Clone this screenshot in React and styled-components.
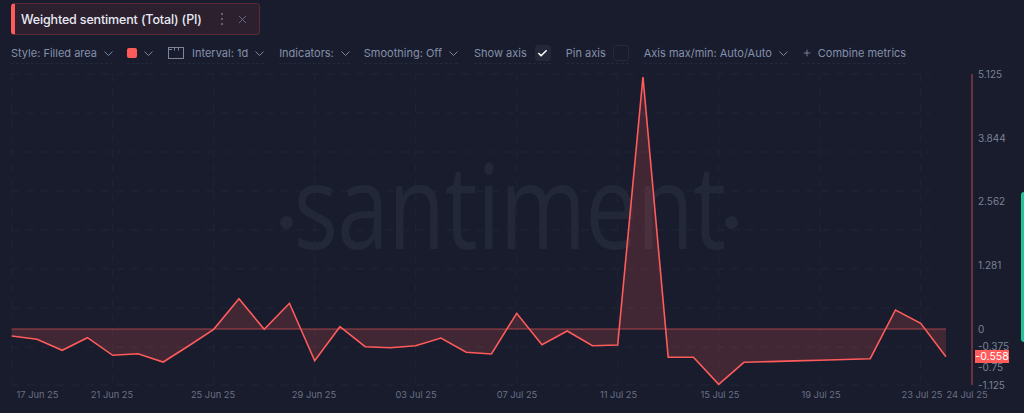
import React from "react";
import styled, { createGlobalStyle } from "styled-components";
import { Check, Plus, X } from "lucide-react";

const Global = createGlobalStyle`
  html, body { margin: 0; padding: 0; background: #181c2d; overflow: hidden; }
  body { font-family: Inter, "Liberation Sans", sans-serif; }
`;

const Page = styled.div`
  width: 1024px; height: 413px; background: #181c2d; position: relative; overflow: hidden;
  display: flex; flex-direction: column; padding: 3px 0 0 11px; box-sizing: border-box;
`;
const MetricRow = styled.div`display: flex; position: relative;`;
const MetricCard = styled.div`
  width: 249px; height: 32px; box-sizing: border-box; display: flex; align-items: center;
  background: #2c1f2e; border: 1px solid #5c2a37; border-left: 4px solid #ff5b5b; border-radius: 4px;
  padding-left: 6px; color: #e7eaf3; font-size: 12.5px; font-weight: 500; letter-spacing: -0.15px;
`;
const MetricName = styled.span`flex: 0 0 178px; white-space: nowrap;`;
const CardIcon = styled.span`
  display: flex; align-items: center; color: #6f7a93; margin-left: ${p => p.$gap}px;
`;
const Toolbar = styled.div`
  position: relative; display: flex; align-items: flex-start; height: 21px; margin-top: 8px; color: #8490aa; font-size: 11px; white-space: nowrap;
`;
const Item = styled.div`
  display: flex; align-items: center; height: 20px; border-bottom: 1px dashed #23283a; margin-right: ${p => p.$mr}px;
`;
const Label = styled.span`margin-left: ${p => p.$ml || 0}px;`;
const ChevSvg = styled.svg`margin-left: ${p => p.$ml || 7}px; flex: none;`;
const Chev = ({ ml }) => (
  <ChevSvg $ml={ml} width="9" height="5" viewBox="0 0 9 5" fill="none" stroke="#7a859e" strokeWidth="1"><path d="M0.5 0.5L4.5 4.5L8.5 0.5" /></ChevSvg>
);
const Swatch = styled.span`width: 10px; height: 10px; background: #ff5b5b; border-radius: 2px; display: block;`;
const CheckBox = styled.span`
  width: 16px; height: 16px; box-sizing: border-box; border-radius: 3px; margin-left: ${p => p.$ml}px; display: flex; align-items: center; justify-content: center;
  background: ${p => p.$on ? "#232839" : "transparent"}; border: 1px solid ${p => p.$on ? "#232839" : "#252a3b"}; color: #fff;
`;
const Chart = styled.svg`position: absolute; left: 0; top: 0; width: 1024px; height: 413px;`;
const Watermark = styled.div`
  position: absolute; left: 280px; top: 140px; width: 458px; height: 164px; display: flex; align-items: center; justify-content: space-between;
  color: #232838;
`;
const WatermarkDot = styled.span`width: 13px; height: 13px; border-radius: 50%; background: #232838; flex: none;`;
const WatermarkText = styled.span`
  flex: none; margin: -36px -60px 0; font-family: "Open Sans", sans-serif; font-weight: 400; font-size: 118px; line-height: 164px; letter-spacing: -1px; white-space: nowrap;
  transform: scaleX(0.79); transform-origin: center;
`;
const Side = styled.div`
  position: absolute; right: 0; top: 192px; width: 3px; height: 150px; background: #26c197; border-radius: 3px 0 0 3px;
`;
const Badge = styled.div`
  position: absolute; left: 975px; top: 350px; width: 34px; height: 13px; background: #ff5b5b; color: #fff; font-size: 10.5px; line-height: 13px; text-align: center;
`;

const ys = [336,339.3,350.3,337.7,355.3,353.7,362,346,329.3,298.7,329.3,303.3,360.7,326.7,346.7,347.7,345.7,338,352.3,354,313.3,344.7,331,345.7,345,77,357.3,357.3,384.3,362.3,361.6,360.9,360.2,359.5,358.7,310,323.3,356.7];
const X0 = 11.7, STEP = 25.25, BASE = 329;
const pts = ys.map((y, i) => [X0 + i * STEP, y]);
const line = pts.map(p => p.join(",")).join(" ");
const area = `${X0},${BASE} ${line} ${pts[pts.length - 1][0]},${BASE}`;
const hLines = [74,113,152,191,230,269,308,347,385];
const vLines = [0,1,2,3,4,5,6,7,8,9].map(i => 11.7 + i * 101);
const dates = [["17 Jun 25",37.5],["21 Jun 25",112],["25 Jun 25",213],["29 Jun 25",314],["03 Jul 25",416],["07 Jul 25",517],["11 Jul 25",618.5],["15 Jul 25",720],["19 Jul 25",821],["23 Jul 25",922],["24 Jul 25",967]];
const axis = [["5.125",74],["3.844",138],["2.562",201],["1.281",265],["0",329],["-0.375",346],["-0.75",367],["-1.125",385]];

const DotsIcon = () => (
  <svg width="4" height="14" viewBox="0 0 4 14"><circle cx="2" cy="2" r="1" fill="currentColor"/><circle cx="2" cy="7" r="1" fill="currentColor"/><circle cx="2" cy="12" r="1" fill="currentColor"/></svg>
);
const IntervalIcon = () => (
  <svg width="16" height="12" viewBox="0 0 16 12" fill="none" stroke="#7a859e" strokeWidth="1"><rect x="0.5" y="0.5" width="15" height="11"/><path d="M1 2.5H4M6.5 1v2.5M10.5 1v2.5" /></svg>
);

export default function App() {
  return (
    <Page>
      <Global />
      <Watermark>
        <WatermarkDot />
        <WatermarkText>santiment</WatermarkText>
        <WatermarkDot />
      </Watermark>
      <Chart viewBox="0 0 1024 413">
        {hLines.map(y => <line key={y} x1="11" x2="930" y1={y} y2={y} stroke="#212637" strokeWidth="1" strokeDasharray="8 7" />)}
        {vLines.map(x => <line key={x} x1={x} x2={x} y1="74" y2="385" stroke="#212637" strokeWidth="1" strokeDasharray="8 7" />)}
        <polygon points={area} fill="#ff5b5b" fillOpacity="0.18" />
        <line x1={X0} x2={pts[37][0]} y1={BASE} y2={BASE} stroke="#ff5b5b" strokeOpacity="0.4" strokeWidth="1.5" />
        <polyline points={line} fill="none" stroke="#ff5b5b" strokeWidth="1.6" />
        <line x1="972" x2="972" y1="74" y2="385" stroke="#ff5b5b" strokeOpacity="0.7" strokeWidth="1" />
        {dates.map(([t, x]) => <text key={t} x={x} y="398" textAnchor="middle" fontSize="9.3" fill="#6a7084" fontFamily="Inter, sans-serif">{t}</text>)}
        {axis.map(([t, y]) => <text key={t} x="978" y={y + 3.5} fontSize="10" fill="#7a8294" fontFamily="Inter, sans-serif">{t}</text>)}
      </Chart>
      <Side />
      <Badge>-0.558</Badge>
      <MetricRow>
        <MetricCard>
          <MetricName>Weighted sentiment (Total) (PI)</MetricName>
          <CardIcon $gap={18}><DotsIcon /></CardIcon>
          <CardIcon $gap={12}><X size={13} strokeWidth={1.5} /></CardIcon>
        </MetricCard>
      </MetricRow>
      <Toolbar>
        <Item $mr={14}><Label>Style: Filled area</Label><Chev /></Item>
        <Item $mr={15}><Swatch /><Chev /></Item>
        <Item $mr={15}><IntervalIcon /><Label $ml={8}>Interval: 1d</Label><Chev /></Item>
        <Item $mr={14}><Label>Indicators:</Label><Chev /></Item>
        <Item $mr={16}><Label>Smoothing: Off</Label><Chev /></Item>
        <Item $mr={15}><Label>Show axis</Label><CheckBox $on $ml={8}><Check size={11} strokeWidth={3.5} /></CheckBox></Item>
        <Item $mr={15}><Label>Pin axis</Label><CheckBox $ml={7} /></Item>
        <Item $mr={14}><Label>Axis max/min: Auto/Auto</Label><Chev ml={7} /></Item>
        <Item $mr={0}><Plus size={10} /><Label $ml={6}>Combine metrics</Label></Item>
      </Toolbar>
    </Page>
  );
}
